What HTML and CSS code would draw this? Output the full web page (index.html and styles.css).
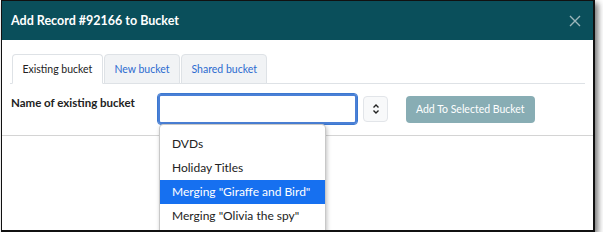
FILE: index.html
```html
<!DOCTYPE html>
<html lang="en">
  <head>
    <meta charset="UTF-8" />
    <title>Add Record to Bucket</title>
    <link rel="stylesheet" href="styles.css">
  </head>
  <body>
    <div class="modal">
      <div class="modal-header">
        <h4 class="modal-title">Add Record #92166 to Bucket</h4>
        <span class="close">
          <svg width="12" height="12" viewBox="0 0 12 12">
            <path d="M1 1 L11 11 M11 1 L1 11" stroke="#9cb6bb" stroke-width="1.4" fill="none" />
          </svg>
        </span>
      </div>
      <div class="modal-body">
        <ul class="tabs">
          <li class="tab active">Existing bucket</li>
          <li class="tab">New bucket</li>
          <li class="tab">Shared bucket</li>
        </ul>
        <div class="form-row">
          <label class="label">Name of existing bucket</label>
          <div class="combo">
            <input class="name-input" type="text" value="" />
            <ul class="dropdown">
              <li>DVDs</li>
              <li>Holiday Titles</li>
              <li class="selected">Merging "Giraffe and Bird"</li>
              <li>Merging "Olivia the spy"</li>
            </ul>
          </div>
          <span class="spin">
            <svg width="8" height="12" viewBox="0 0 8 12">
              <path d="M1.5 4.5 L4 2 L6.5 4.5 M1.5 7.5 L4 10 L6.5 7.5" stroke="#222" stroke-width="1.4" fill="none" />
            </svg>
          </span>
          <button class="add-btn">Add To Selected Bucket</button>
        </div>
      </div>
      <div class="divider"></div>
    </div>
  </body>
</html>
```

FILE: styles.css
```css
* {
  box-sizing: border-box;
}

body {
  margin: 0;
  background-color: #fff;
  font-family: Lato, "Open Sans", sans-serif;
  color: #222;
}

.modal {
  position: relative;
  width: 594px;
  height: 232px;
  margin-left: 1px;
  border: 1px solid #111;
  border-right-width: 2px;
  border-bottom-width: 2px;
  background-color: #fff;
  overflow: hidden;
  box-shadow: 3px 3px 6px rgba(0, 0, 0, 0.55);
}

.modal-header {
  height: 39px;
  background-color: #0a4f5b;
  display: flex;
  justify-content: space-between;
  align-items: center;
  padding: 0 10px 0 9px;
}

.modal-title {
  margin: 0;
  color: #fff;
  font-size: 12.5px;
  font-weight: 700;
}

.close {
  display: flex;
  margin-right: 2px;
}

.modal-body {
  padding: 14px 8px 0 8px;
}

.tabs {
  display: flex;
  margin: 0;
  padding: 0 0 0 2px;
  list-style: none;
  border-bottom: 1px solid #dee2e6;
  width: 575px;
}

.tab {
  height: 30px;
  margin-bottom: -1px;
  margin-right: 1px;
  padding: 0 9.5px;
  display: flex;
  align-items: center;
  font-size: 10.5px;
  color: #2c6bd0;
  background-color: #f1f3f5;
  border: 1px solid #dee2e6;
  border-radius: 4px 4px 0 0;
}

.tab.active {
  color: #222;
  background-color: #fff;
  border-bottom-color: #fff;
}

.form-row {
  display: flex;
  align-items: center;
  margin-top: 9px;
  height: 32px;
}

.label {
  width: 147px;
  padding-left: 1px;
  font-size: 11.5px;
  font-weight: 700;
  align-self: flex-start;
  padding-top: 3px;
}

.combo {
  position: relative;
}

.name-input {
  display: block;
  width: 201px;
  height: 32px;
  margin: 0;
  border: 1px solid #3c78d0;
  border-radius: 4px;
  box-shadow: inset 0 0 0 2px #4a80d6;
  outline: none;
  font-size: 12px;
}

.dropdown {
  position: absolute;
  top: 31px;
  left: 2px;
  width: 167px;
  height: 120px;
  margin: 0;
  padding: 7px 0 0 0;
  list-style: none;
  background-color: #fff;
  border: 1px solid #c8c8c8;
  border-radius: 4px;
  box-shadow: 1px 2px 4px rgba(0, 0, 0, 0.25);
}

.dropdown li {
  height: 24px;
  line-height: 24px;
  padding-left: 12px;
  font-size: 12px;
  white-space: nowrap;
}

.dropdown li.selected {
  background-color: #1670f0;
  color: #fff;
}

.spin {
  width: 25px;
  height: 26px;
  margin-left: 5px;
  display: flex;
  align-items: center;
  justify-content: center;
  border: 1px solid #e2e5e9;
  border-radius: 4px;
  background-color: #f8f9fa;
}

.add-btn {
  height: 27px;
  margin-left: 18px;
  padding: 0 10px;
  border: none;
  border-radius: 4px;
  background-color: #88adb4;
  color: #fff;
  font-family: Lato, "Open Sans", sans-serif;
  font-size: 10.5px;
}

.divider {
  margin-top: 10px;
  border-top: 1px solid #d4d4d4;
}
```
